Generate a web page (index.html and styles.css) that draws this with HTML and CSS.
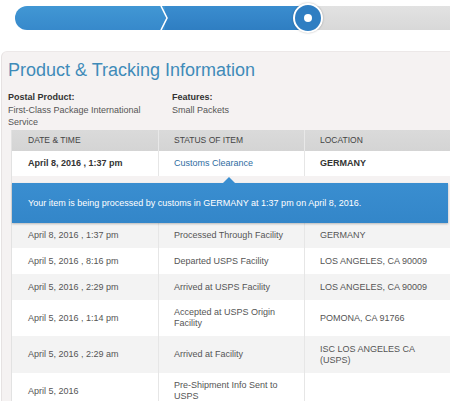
FILE: index.html
```html
<!DOCTYPE html>
<html>
<head>
<meta charset="utf-8">
<link rel="stylesheet" href="styles.css">
</head>
<body>
<div class="progress">
  <div class="seg seg1"></div>
  <div class="seg seg2"></div>
  <div class="seg seg3"></div>
  <svg class="chev" width="12" height="24" viewBox="0 0 12 24"><polyline points="2,0 8,12 2,24" fill="none" stroke="#ffffff" stroke-width="1.6"/></svg>
  <div class="dot"><div class="dot-in"></div></div>
</div>

<div class="panel">
  <h1 class="title">Product &amp; Tracking Information</h1>
  <div class="info">
    <div class="info-col info-col1">
      <div class="info-label">Postal Product:</div>
      <div class="info-val">First-Class Package International Service</div>
    </div>
    <div class="info-col">
      <div class="info-label">Features:</div>
      <div class="info-val">Small Packets</div>
    </div>
  </div>

  <div class="table">
    <div class="row head">
      <div class="cell c1">DATE &amp; TIME</div>
      <div class="cell c2">STATUS OF ITEM</div>
      <div class="cell c3">LOCATION</div>
    </div>
    <div class="row current">
      <div class="cell c1">April 8, 2016 , 1:37 pm</div>
      <div class="cell c2 link">Customs Clearance</div>
      <div class="cell c3">GERMANY</div>
    </div>
    <div class="note">
      <span class="pointer"></span>
      Your item is being processed by customs in GERMANY at 1:37 pm on April 8, 2016.
    </div>
    <div class="row odd h25">
      <div class="cell c1">April 8, 2016 , 1:37 pm</div>
      <div class="cell c2"><span class="wrap">Processed Through Facility</span></div>
      <div class="cell c3"><span class="wrap3">GERMANY</span></div>
    </div>
    <div class="row h26">
      <div class="cell c1">April 5, 2016 , 8:16 pm</div>
      <div class="cell c2"><span class="wrap">Departed USPS Facility</span></div>
      <div class="cell c3"><span class="wrap3">LOS ANGELES, CA 90009</span></div>
    </div>
    <div class="row odd h26">
      <div class="cell c1">April 5, 2016 , 2:29 pm</div>
      <div class="cell c2"><span class="wrap">Arrived at USPS Facility</span></div>
      <div class="cell c3"><span class="wrap3">LOS ANGELES, CA 90009</span></div>
    </div>
    <div class="row h36">
      <div class="cell c1">April 5, 2016 , 1:14 pm</div>
      <div class="cell c2"><span class="wrap">Accepted at USPS Origin Facility</span></div>
      <div class="cell c3"><span class="wrap3">POMONA, CA 91766</span></div>
    </div>
    <div class="row odd h37">
      <div class="cell c1">April 5, 2016 , 2:29 am</div>
      <div class="cell c2"><span class="wrap">Arrived at Facility</span></div>
      <div class="cell c3"><span class="wrap3">ISC LOS ANGELES CA (USPS)</span></div>
    </div>
    <div class="row h36">
      <div class="cell c1">April 5, 2016</div>
      <div class="cell c2"><span class="wrap">Pre-Shipment Info Sent to USPS</span></div>
      <div class="cell c3"></div>
    </div>
  </div>
</div>
</body>
</html>
```

FILE: styles.css
```css
* { box-sizing: border-box; }
html, body { margin: 0; padding: 0; background: #ffffff; overflow: hidden; }
body {
  font-family: "Liberation Sans", Arial, sans-serif;
  color: #555;
  width: 450px;
  height: 401px;
}

.progress {
  position: relative;
  display: flex;
  margin: 6px 0 0 15px;
  height: 24px;
  border-radius: 12px 0 0 12px;
  overflow: visible;
}
.seg { height: 24px; }
.seg1 {
  width: 150px;
  border-radius: 12px 0 0 12px;
  background: linear-gradient(#4197d4, #3789cb);
}
.seg2 {
  width: 145px;
  background: linear-gradient(#3a8dcf, #2f7ec2);
}
.seg3 {
  flex: 1;
  background: linear-gradient(#e2e2e2, #d8d8d8);
}
.chev { position: absolute; left: 144px; top: 0; }
.dot {
  position: absolute;
  left: 278px;
  top: -3px;
  width: 30px;
  height: 30px;
  border-radius: 50%;
  background: #2f7ec2;
  border: 2px solid #ffffff;
  box-shadow: 0 0 2px rgba(0,0,0,0.3);
  display: flex;
  align-items: center;
  justify-content: center;
}
.dot-in {
  width: 8px;
  height: 8px;
  border-radius: 50%;
  background: #ffffff;
}

.panel {
  margin: 21px 0 0 1px;
  background: #f5f2f2;
  border-left: 1px solid #e6e2e2;
  border-top: 1px solid #ece8e8;
  border-radius: 6px 0 0 0;
  height: 360px;
}
.title {
  margin: 0;
  padding: 8px 0 0 6px;
  font-size: 18px;
  line-height: 21px;
  font-weight: normal;
  color: #3f8bb9;
}
.info {
  display: flex;
  margin-top: 10px;
  padding-left: 6px;
  font-size: 9px;
  line-height: 12px;
  color: #555;
}
.info-col1 { width: 164px; padding-right: 25px; }
.info-label { font-weight: bold; color: #333; margin-bottom: 1px; }
.info-val { color: #555; }

.table {
  margin: 2px 0 0 9px;
  border-left: 1px solid #e2e2e2;
  font-size: 9px;
  line-height: 11px;
}
.row {
  display: grid;
  grid-template-columns: 146px 146px 1fr;
  background: #ffffff;
}
.cell {
  display: flex;
  align-items: center;
  padding-left: 16px;
}
.c2, .c3 { border-left: 1px solid #e6e6e6; padding-left: 15px; }
.head {
  height: 21px;
  background: linear-gradient(#dadada, #d4d4d4);
  color: #444;
  font-size: 8.5px;
}
.head .c2, .head .c3 { border-left: 1px solid #e8e8e8; }
.current { height: 25px; font-weight: bold; color: #333; }
.current .link { font-weight: normal; color: #2f6c9f; }
.note {
  position: relative;
  margin: 7px 2px 0 0;
  height: 40px;
  padding-left: 16px;
  display: flex;
  align-items: center;
  color: #ffffff;
  font-size: 9px;
  background: linear-gradient(#3a8ed0, #3386c9);
  box-shadow: 0 1px 2px rgba(0,0,0,0.25);
}
.pointer {
  position: absolute;
  left: 211px;
  top: -6px;
  width: 0;
  height: 0;
  border-left: 6px solid transparent;
  border-right: 6px solid transparent;
  border-bottom: 6px solid #3a8ed0;
}
.odd { background: #f3f3f3; }
.h25 { height: 25px; }
.h26 { height: 26px; }
.h36 { height: 36px; }
.h37 { height: 37px; }
.wrap { max-width: 112px; }
.wrap3 { max-width: 112px; }
```
